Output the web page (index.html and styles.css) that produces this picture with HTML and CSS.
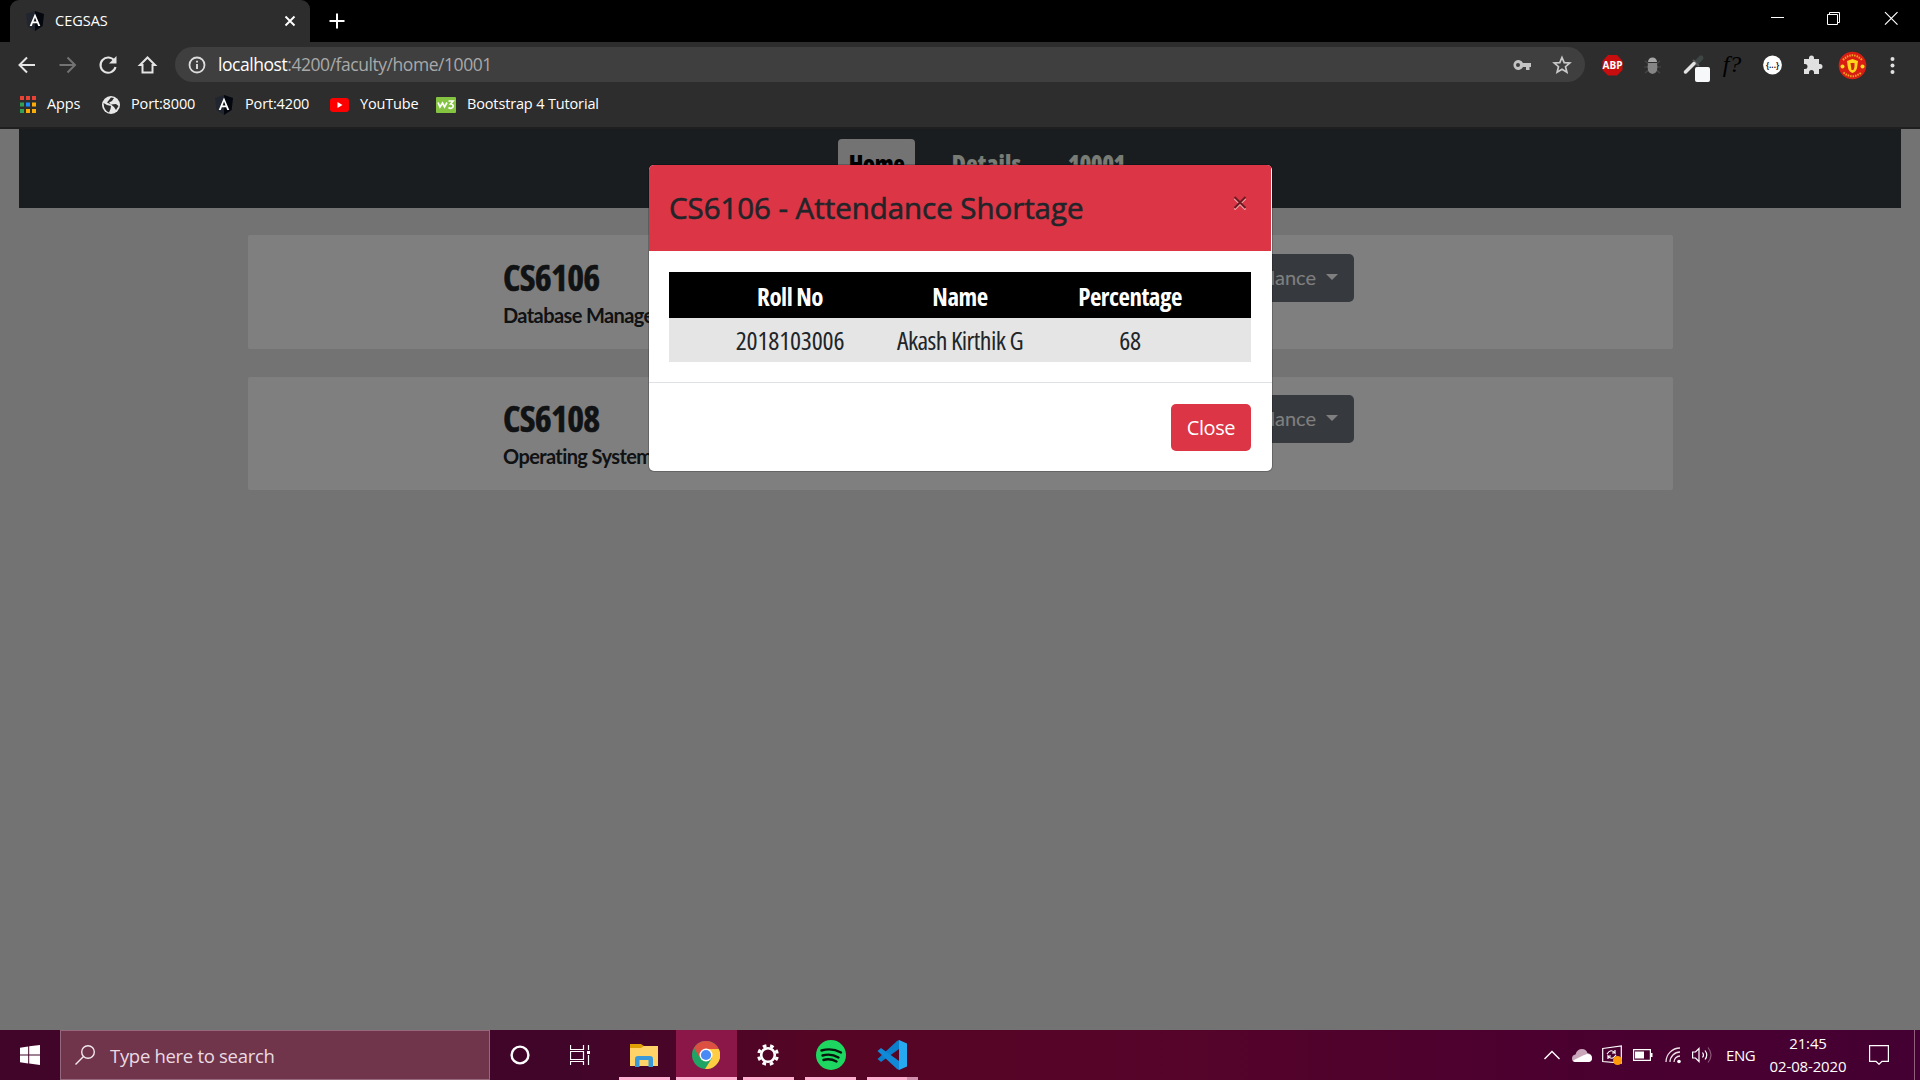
FILE: index.html
```html
<!DOCTYPE html>
<html lang="en">
<head>
<meta charset="utf-8">
<title>CEGSAS</title>
<link rel="stylesheet" href="styles.css">
</head>
<body>
<svg class="defs" width="0" height="0">
  <symbol id="angular" viewBox="0 0 20 20"><path fill="#20252f" d="M10 0 19 3 17.6 15 10 20 2.400 15 1 3Z"/><path fill="#05070f" d="M10 0 19 3 17.600 15 10 20Z"/><path fill="#fff" fill-rule="evenodd" d="M10 2.500 15.300 15H13.200L12.200 12.300H7.800L6.800 15H4.700ZM10 6.600 8.500 10.500H11.500Z"/></symbol>
</svg>
<header class="browser">
  <div class="tabstrip">
    <div class="tab"><svg class="fav" width="20" height="20"><use href="#angular"/></svg><span class="tab-title">CEGSAS</span><svg class="tab-x" width="12" height="12" viewBox="0 0 12 12"><path d="M1.500 1.500 10.500 10.500M10.500 1.500 1.500 10.500" stroke="#fff" stroke-width="1.900"/></svg></div>
    <svg class="plus" width="16" height="16" viewBox="0 0 16 16"><path d="M8 .5V15.500M.5 8H15.500" stroke="#fff" stroke-width="2"/></svg>
    <div class="controls">
      <svg width="57" height="34" viewBox="0 0 57 34"><path d="M22 17.500H35" stroke="#fff"/></svg>
      <svg width="57" height="34" viewBox="0 0 57 34"><path d="M21.500 14.500H31.500V24.500H21.500ZM23.500 14V12.500H33.500V22.500H32" stroke="#fff" fill="none"/></svg>
      <svg width="57" height="34" viewBox="0 0 57 34"><path d="M22 12.200 34.500 24.700M34.500 12.200 22 24.700" stroke="#fff" stroke-width="1.200"/></svg>
    </div>
  </div>
  <div class="toolbar">
    <svg width="40" height="40" viewBox="0 0 40 40"><path d="M28 20H13M20 12.500 12.500 20 20 27.500" fill="none" stroke="#e4e4e4" stroke-width="2"/></svg>
    <svg width="40" height="40" viewBox="0 0 40 40"><path d="M12.500 20H27.500M20.500 12.500 28 20 20.500 27.500" fill="none" stroke="#737373" stroke-width="2"/></svg>
    <svg width="40" height="40" viewBox="0 0 40 40"><path d="M27.500 16A7.600 7.600 0 1 0 28.500 22" fill="none" stroke="#e4e4e4" stroke-width="2.100"/><path d="M29.500 11V18.500H22Z" fill="#e4e4e4"/></svg>
    <svg width="40" height="40" viewBox="0 0 40 40"><path d="M15.500 20V27.500H25.500V20H28L20.500 12.500 13 20Z" fill="none" stroke="#e4e4e4" stroke-width="2"/></svg>
    <div class="omnibox">
      <svg width="18" height="18" viewBox="0 0 18 18"><circle cx="9" cy="9" r="7.500" fill="none" stroke="#ddd" stroke-width="1.800"/><path d="M9 8V13M9 4.700V6.500" stroke="#ddd" stroke-width="1.900"/></svg>
      <span class="url"><b>localhost</b>:4200/faculty/home/10001</span>
      <svg class="key" width="20" height="12" viewBox="0 0 20 12"><path d="M11 4H19V8H17.500V11H14V8H11A5 5 0 1 1 11 4Z" fill="#c4c4c4"/><circle cx="6" cy="6" r="2" fill="#3f3f3f"/></svg>
      <svg width="20" height="20" viewBox="0 0 20 20"><path d="M10 2.500 12.200 7.600 17.800 8 13.500 11.700 14.900 17.200 10 14.200 5.100 17.200 6.500 11.700 2.200 8 7.800 7.600Z" fill="none" stroke="#c9c9c9" stroke-width="1.700"/></svg>
    </div>
    <div class="extensions">
      <svg width="40" height="40" viewBox="0 0 40 40"><path d="M16 10H25L30.500 16V25L25 30.500H16L10.500 25V16Z" fill="#c70d0d"/><text x="20.500" y="24" class="abp">ABP</text></svg>
      <svg width="40" height="40" viewBox="0 0 40 40"><path d="M13 16 28 28M28 16 13 28M12 22H29" stroke="#484848" stroke-width="1.200"/><path d="M16 17A4.500 4.500 0 0 1 25 17Z" fill="#a7a7a7"/><path d="M16 18H25Q27 28 20.500 29 14 28 16 18" fill="#858585"/></svg>
      <svg width="40" height="40" viewBox="0 0 40 40"><path d="M24 18 29 13" stroke="#3f4646" stroke-width="5" stroke-linecap="round"/><path d="M21 15 27 21" stroke="#5a5d5d" stroke-width="2"/><path d="M13.500 27 22 18.500" stroke="#e2e2e2" stroke-width="3.500" stroke-linecap="round"/><rect x="23" y="22" width="15" height="15" rx="2" fill="#f7f8fa"/></svg>
      <span class="fx"><em>f</em>?</span>
      <svg width="40" height="40" viewBox="0 0 40 40"><circle cx="20.500" cy="20" r="9.400" fill="#fff"/><text x="20.500" y="23" class="json">{...}</text></svg>
      <svg width="40" height="40" viewBox="0 0 40 40"><path d="M12 14H17V13A2.300 2.300 0 0 1 22 13V14H27V19H28A2.500 2.500 0 0 1 28 24H27V29H22V27.500A2.500 2.500 0 0 0 17 27.500V29H12V24H13A2.500 2.500 0 0 0 13 19H12Z" fill="#e0e0e0"/></svg>
      <svg width="40" height="40" viewBox="0 0 40 40"><circle cx="20.500" cy="20.500" r="13.800" fill="#d81e14"/><path d="M11 15Q20.500 5.500 30 15M11.500 27.500Q20.500 35 29.500 27.500" fill="none" stroke="#f1a51c" stroke-width="2" stroke-dasharray="1.500 1"/><circle cx="10.500" cy="21.500" r="2" fill="#ffdb19"/><circle cx="30.500" cy="21.500" r="2" fill="#ffdb19"/><path d="M15 16 20.500 14 26 16 25 23Q24 27 20.500 28 17 27 16 23Z" fill="#ffd51b"/><path d="M18.500 18H22.500V22L21.500 25H19.500Z" fill="#ce2a1a"/></svg>
      <svg width="40" height="40" viewBox="0 0 40 40" fill="#e0e0e0"><circle cx="20.500" cy="14" r="2"/><circle cx="20.500" cy="20.500" r="2"/><circle cx="20.500" cy="27" r="2"/></svg>
    </div>
  </div>
  <nav class="bookmarks">
    <a><svg width="16" height="17" viewBox="0 0 16 17"><path fill="#ea4335" d="M0 0H4V4H0ZM6 0H10V4H6ZM12 0H16V4H12Z"/><path fill="#34a056" d="M0 6.500H4V10.500H0ZM0 13H4V17H0Z"/><path fill="#1e88ff" d="M6 6.500H10V10.500H6Z"/><path fill="#fbac08" d="M12 6.500H16V10.500H12ZM6 13H10V17H6ZM12 13H16V17H12Z"/></svg><span>Apps</span></a>
    <a><svg width="18" height="18" viewBox="0 0 18 18"><circle cx="9" cy="9" r="9" fill="#e8e8e8"/><path d="M1.500 7 5 9 9 10 8.500 13 7 16.500Q2 15 1.500 7ZM9 1.500 12 2 10 5 7 6.500 9 8.500 14 8 16.500 10 14 14 12 11 9 8.500 5 6.500Z" fill="#2d2d2d"/></svg><span>Port:8000</span></a>
    <a><svg width="20" height="20"><use href="#angular"/></svg><span>Port:4200</span></a>
    <a><svg width="19" height="14" viewBox="0 0 19 14"><rect width="19" height="14" rx="3" fill="#f00"/><path d="M7.500 4 12.500 7 7.500 10Z" fill="#fff"/></svg><span>YouTube</span></a>
    <a><svg width="20" height="16" viewBox="0 0 20 16"><rect width="20" height="16" rx="1" fill="#85c440"/><path d="M2 5.500 4 10 6.500 6 8.500 10 11 5.500M12.500 4H17L14.500 7Q18 7.500 17 10 15 12.500 12.500 10.500" fill="none" stroke="#fff" stroke-width="1.700"/></svg><span>Bootstrap 4 Tutorial</span></a>
  </nav>
</header>
<main class="page">
  <nav class="navbar"><a class="nav active">Home</a><a class="nav wide">Details</a><a class="nav">10001</a></nav>
  <section class="card"><div><h2>CS6106</h2><p>Database Management Systems</p></div><button class="drop">Attendance <i></i></button></section>
  <section class="card second"><div><h2>CS6108</h2><p>Operating Systems</p></div><button class="drop">Attendance <i></i></button></section>
  <div class="backdrop">
    <div class="modal">
      <div class="modal-head"><h1>CS6106 - Attendance Shortage</h1><svg width="16" height="16" viewBox="0 0 16 16"><path d="M2.500 3.500 13.500 14.500M13.500 3.500 2.500 14.500" stroke="#f4a9af" stroke-width="1.800"/><path d="M2.500 2 13.500 13M13.500 2 2.500 13" stroke="#6e1a22" stroke-width="2"/></svg></div>
      <div class="modal-body">
        <div class="row thead"><span>Roll No</span><span>Name</span><span>Percentage</span></div>
        <div class="row"><span>2018103006</span><span class="name">Akash Kirthik G</span><span>68</span></div>
      </div>
      <div class="modal-foot"><button class="close">Close</button></div>
    </div>
  </div>
</main>
<footer class="taskbar">
  <div class="start"><svg width="20" height="20" viewBox="0 0 20 20" fill="#fff"><path d="M0 2.700 8.200 1.500V9.400H0ZM9.200 1.300 20 0V9.400H9.200ZM0 10.400H8.200V18.400L0 17.300ZM9.200 10.400H20V20L9.200 18.600Z"/></svg></div>
  <div class="search"><svg width="20" height="20" viewBox="0 0 20 20"><circle cx="13" cy="7" r="6.300" fill="none" stroke="#f2e8ec" stroke-width="1.400"/><path d="M8.500 11.500.5 19.500" stroke="#f2e8ec" stroke-width="1.400"/></svg><span>Type here to search</span></div>
  <div class="apps">
    <div class="app"><svg width="20" height="20" viewBox="0 0 20 20"><circle cx="10" cy="10" r="8.400" fill="none" stroke="#fff" stroke-width="2.400"/></svg></div>
    <div class="app"><svg width="20" height="20" viewBox="0 0 20 20"><path d="M.5 0V4.500H13.500V0M.5 6.500H13.500V14.500H.5ZM.5 20V16.500H13.500V20M18.500 0V5M18.500 10V20" fill="none" stroke="#fff" stroke-width="1.200"/><path d="M17 6H20V9H17Z" fill="#fff"/></svg></div>
    <div class="app open explorer"><svg width="28" height="24" viewBox="0 0 28 24"><path d="M0 1H11L14 3V9H0Z" fill="#dfa006"/><path d="M0 5H11L14 3H28V23H0Z" fill="#ffd368"/><path d="M5 24V16Q5 13 8 13H20Q23 13 23 16V24H18.500V17H9.500V24Z" fill="#3b99d8"/></svg></div>
    <div class="app open current"><svg width="28" height="28" viewBox="0 0 28 28"><circle cx="14" cy="14" r="14" fill="#20a464"/><path d="M2 7A14 14 0 0 1 27 8.500H14L8 17Z" fill="#dd4f41"/><path d="M14 8H26.800A14 14 0 0 1 13 28L20 17Z" fill="#ffcd42"/><circle cx="14" cy="14" r="6.500" fill="#fff"/><circle cx="14" cy="14" r="5.100" fill="#4a8af5"/></svg></div>
    <div class="app open gear"><svg width="24" height="24" viewBox="0 0 24 24"><circle cx="12" cy="12" r="6.800" fill="none" stroke="#fff" stroke-width="2.600"/><circle cx="12" cy="12" r="9.300" fill="none" stroke="#fff" stroke-width="3.200" stroke-dasharray="3.652 3.652" transform="rotate(11.250 12 12)"/></svg></div>
    <div class="app open"><svg width="30" height="30" viewBox="0 0 30 30"><circle cx="15" cy="15" r="15" fill="#1ed760"/><path d="M5.500 10.500Q16 7.500 25 12.500M6.500 15.500Q15 13 22.500 17.500M7.500 20Q14 18 20.500 21.500" fill="none" stroke="#08150c" stroke-width="2.400" stroke-linecap="round"/></svg></div>
    <div class="app open stacked"><svg width="30" height="30" viewBox="0 0 30 30"><path d="M.5 19 20 1 22 0V9L4 22Z" fill="#0b7fcb"/><path d="M.5 11 4 8 22 21V30L20 29Z" fill="#1289d6"/><path d="M22 0 30 3.500V26.500L22 30Z" fill="#27a9f2"/></svg></div>
  </div>
  <div class="tray">
    <svg width="16" height="10" viewBox="0 0 16 10"><path d="M.5 9 8 1.500 15.500 9" fill="none" stroke="#fff" stroke-width="1.400"/></svg>
    <svg width="20" height="13" viewBox="0 0 20 13"><path d="M0 9.500Q0 6 3.500 5.500 5 0 10 0 14 0 15.500 4 20 5 20 9 20 13 16 13H3.500Q0 13 0 9.500" fill="#c9a6ba"/><path d="M1 11.500 11 6.500 15 5Q20 5 20 9.300 20 13 16 13H3.500Q2 13 1 11.500" fill="#fff"/></svg>
    <svg width="21" height="21" viewBox="0 0 21 21"><path d="M.7 3.500 19.300 1V18L.7 16.500Z" fill="none" stroke="#fff" stroke-width="1.200"/><path d="M5 9Q9 3 13 8V5M13 8H10M14 10Q10 16 6 11V14M6 11H9" fill="none" stroke="#fff" stroke-width="1.200"/><circle cx="15.500" cy="15.500" r="4.500" fill="#ff9b0b"/></svg>
    <svg width="20" height="12" viewBox="0 0 20 12"><path d="M.6.6H17.400V11.400H.6Z" fill="none" stroke="#fff" stroke-width="1.200"/><path d="M2 2.500H11V9.500H2ZM17.500 4H19.500V8H17.500Z" fill="#fff"/></svg>
    <svg width="17" height="17" viewBox="0 0 17 17"><path d="M1 15A14 14 0 0 1 15 1M5 15A10 10 0 0 1 15 5M9 15A6 6 0 0 1 15 9" fill="none" stroke="#f0dfe9" stroke-width="1.300"/><circle cx="14" cy="14.500" r="1.800" fill="#fff"/></svg>
    <svg width="21" height="18" viewBox="0 0 21 18"><path d="M.6 6H3.500L7 2.500V15.500L3.500 12H.6ZM10.500 6.500Q12.500 9 10.500 11.500M13 4.500Q16.500 9 13 13.500" fill="none" stroke="#fff" stroke-width="1.200"/><path d="M16 1.500Q22 9 16 16.500" fill="none" stroke="#8d5876" stroke-width="1.200"/></svg>
    <span class="lang">ENG</span>
    <div class="clock"><span>21:45</span><span>02-08-2020</span></div>
    <svg width="20" height="20" viewBox="0 0 20 20"><path d="M.6.6H19.400V16.400H13L10 19.300 7 16.400H.6Z" fill="none" stroke="#fff" stroke-width="1.200"/></svg>
    <i class="peek"></i>
  </div>
</footer>
</body>
</html>
```
FILE: styles.css
```css
* { box-sizing: border-box; }
body { margin: 0; width: 1920px; height: 1080px; overflow: hidden; display: flex; flex-direction: column; font-family: "Open Sans", "Noto Sans", sans-serif; color: #212529; }
.defs { display: none; }
svg { display: block; flex: none; }
span { white-space: nowrap; }
button { border: 0; font-family: inherit; }

.browser { height: 129px; background: #2d2d2d; border-bottom: 2px solid #1f1f1f; color: #fff; font-size: 14.500px; letter-spacing: -.15px; }
.tabstrip { height: 42px; background: #000; display: flex; align-items: center; padding-left: 10px; }
.tab { width: 300px; height: 42px; background: #2d2d2d; border-radius: 9px 9px 0 0; display: flex; align-items: center; padding: 0 14px 1px 15px; }
.tab-title { margin-left: 10px; flex: 1; padding-bottom: 1px; letter-spacing: 0; }
.plus { margin-left: 19px; }
.controls { margin-left: auto; height: 42px; display: flex; }
.toolbar { height: 45px; display: flex; align-items: center; padding-left: 7px; }
.omnibox { margin-left: 8px; width: 1410px; height: 35px; border-radius: 18px; background: #3f3f3f; display: flex; align-items: center; padding: 0 13px; font-size: 17.500px; letter-spacing: -.450px; color: #a9a9a9; }
.url { margin-left: 12px; padding-bottom: 2px; }
.url b { color: #fff; font-weight: 400; }
.key { margin-left: auto; margin-right: 20px; }
.extensions { display: flex; align-items: center; margin-left: 7px; letter-spacing: 0; }
.abp { font: bold 10px "Open Sans", sans-serif; fill: #fff; text-anchor: middle; }
.json { font: bold 8px "Open Sans", sans-serif; fill: #222; text-anchor: middle; }
.fx { width: 40px; text-align: center; color: #000; font: italic 24px/30px "Liberation Serif", serif; padding-bottom: 2px; }
.bookmarks { height: 35px; display: grid; grid-template-columns: 82px 112px 116px 106px 200px; padding-left: 20px; align-items: center; }
.bookmarks a { display: flex; align-items: center; gap: 11px; }
.bookmarks span { padding-bottom: 2px; }

.page { height: 901px; background: #e6e6e6; position: relative; padding: 0 19px; }
.navbar { height: 79px; background: #343a40; display: flex; padding: 10px 0 0 819px; font-weight: 800; font-stretch: 75%; font-size: 24px; letter-spacing: -.5px; color: #f0f8e8; }
.nav { height: 50px; line-height: 50px; width: 77px; margin-right: 33px; border-radius: 4px; text-align: center; }
.nav.active { background: #e6e6e6; color: #000; }
.nav.wide { letter-spacing: .2px; }
.card { margin: 27px 228px 0 229px; height: 114px; background: #fff; display: flex; padding: 19px 0 0 256px; border-radius: 2px; }
.card.second { margin-top: 28px; height: 113px; padding-top: 18px; }
.card h2 { margin: 0 0 0 -1px; font-size: 36px; line-height: 47px; font-weight: 700; font-stretch: 75%; letter-spacing: -.700px; -webkit-text-stroke: .5px #212529; }
.card p { margin: 0 0 0 -1px; font: bold 20px/28px Lato, sans-serif; letter-spacing: -.6px; white-space: nowrap; }
.card > div { width: 594px; }
.drop { width: 256px; height: 48px; background: #6c757d; color: #fff; border-radius: 5px; font: 20px/46px Lato, sans-serif; display: flex; justify-content: flex-end; padding: 0 16px 0 0; }
.drop i { border: 6px solid transparent; border-top-color: #fff; border-bottom: 0; margin: 20px 0 0 10px; height: 6px; }

.backdrop { position: absolute; inset: 0; background: rgba(0,0,0,.5); padding: 36px 0 0 649px; }
.modal { width: 623px; height: 306px; background: #fff; border-radius: 5px; box-shadow: 0 0 0 1px rgba(0,0,0,.2); overflow: hidden; }
.modal-head { width: 622px; height: 86px; background: #dc3545; display: flex; justify-content: space-between; padding: 20px 23px 0 20px; }
.modal-head svg { margin-top: 10px; }
.modal-head h1 { margin: 0; font-size: 29.500px; line-height: 46px; font-weight: 400; letter-spacing: -.05px; -webkit-text-stroke: .6px #212529; }
.modal-body { margin: 21px 20px 20px; width: 582px; }
.row { height: 44px; background: #e5e5e5; display: grid; grid-template-columns: repeat(3,170px); justify-content: center; align-items: center; justify-items: center; font-size: 26px; font-stretch: 75%; letter-spacing: -.2px; }
.row .name { letter-spacing: -.6px; }
.thead { height: 46px; padding-top: 1px; background: #000; color: #fff; font-weight: 700; font-size: 25px; letter-spacing: -.5px; }
.modal-foot { border-top: 1px solid #dee2e6; padding: 21px 21px; display: flex; justify-content: flex-end; }
.close { width: 80px; height: 47px; border-radius: 5px; background: #dc3545; color: #fff; font-size: 20px; letter-spacing: -.4px; }

.taskbar { height: 50px; display: flex; background: linear-gradient(90deg,#42052a 0,#42052a 30%,#560524 43%,#560429 60%,#4b002f 80%,#440032); color: #fff; }
.start { width: 60px; display: grid; place-items: center; }
.search { width: 430px; background: #70344b; border: 1px solid #95687c; display: flex; align-items: center; gap: 15px; padding-left: 14px; font-size: 18.500px; letter-spacing: -.3px; color: #eadbe2; }
.apps { display: grid; grid-template-columns: 60px 60px 66px 61px 63px 61px 62px; }
.app { display: grid; place-items: center; position: relative; }
.explorer { margin-left: 3px; }
.explorer svg { margin-right: 2px; }
.open::after { content: ""; position: absolute; bottom: 0; left: calc(50% - 25.500px); width: 51px; height: 3px; background: #ffb1d1; }
.current { background: #8b1749; }
.current svg, .gear svg { margin-right: 2px; }
.current::after { left: 0; width: 61px; }
.stacked::after { background: linear-gradient(90deg, #ffb1d1 40px, #cf8fad 40px); }
.tray { margin-left: auto; display: grid; grid-template-columns: 28px 30px 31px 32px 27px 34px 42px 101px 45px 6px; align-items: center; font-size: 15px; letter-spacing: -.150px; }
.lang { letter-spacing: -.4px; }
.clock { width: 80px; display: flex; flex-direction: column; align-items: center; line-height: 23px; }
.peek { width: 1px; height: 50px; background: #8f5f7d; }
```
